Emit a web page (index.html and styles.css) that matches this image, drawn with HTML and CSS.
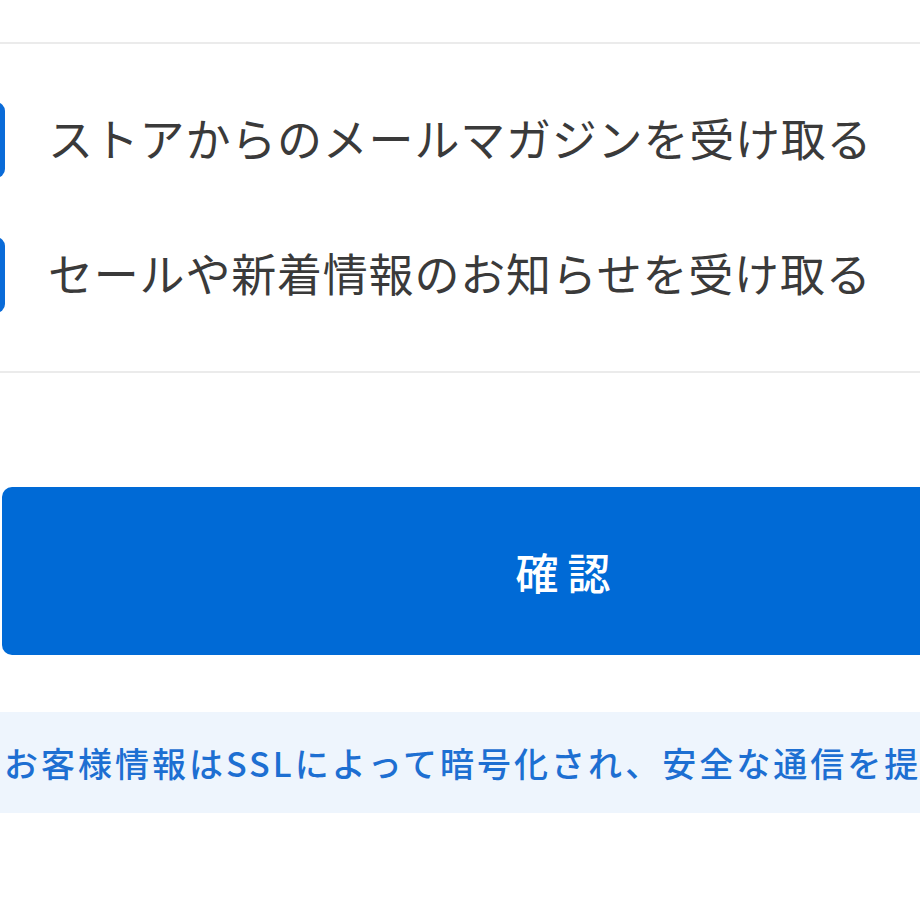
FILE: index.html
```html
<!DOCTYPE html>
<html lang="ja">
<head>
  <meta charset="UTF-8">
  <meta name="viewport" content="width=device-width, initial-scale=1.0">
  <title>確認</title>
  <link rel="stylesheet" href="styles.css">
</head>
<body>
  <div class="page">
    <div class="options">
      <label class="option">
        <span class="box"></span>
        <span class="label">ストアからのメールマガジンを受け取る</span>
      </label>
      <label class="option">
        <span class="box"></span>
        <span class="label">セールや新着情報のお知らせを受け取る</span>
      </label>
    </div>

    <button class="submit" type="button">確認</button>

    <div class="notice">お客様情報はSSLによって暗号化され、安全な通信を提供しています。</div>
  </div>
</body>
</html>
```

FILE: styles.css
```css
body {
  margin: 0;
  font-family: "Noto Sans CJK JP", "Noto Sans", sans-serif;
  background: #fff;
  overflow: hidden;
}

.page {
  width: 1124px;
}

.options {
  margin-top: 42px;
  border-top: 2px solid #ebebeb;
  border-bottom: 2px solid #ebebeb;
  padding: 58px 0;
  display: flex;
  flex-direction: column;
  gap: 59px;
}

.option {
  display: flex;
  align-items: center;
  gap: 43px;
  height: 76px;
  margin-left: -71px;
}

.box {
  width: 76px;
  height: 76px;
  border-radius: 9px;
  background: #0a6bd8;
  flex-shrink: 0;
}

.label {
  padding-bottom: 5px;
  font-size: 45px;
  line-height: 1;
  letter-spacing: 0.8px;
  color: #3a3a3a;
}

.submit {
  display: flex;
  align-items: center;
  justify-content: center;
  margin: 114px 0 0 2px;
  width: 1122px;
  height: 168px;
  padding: 0 0 0 9px;
  border: none;
  border-radius: 10px;
  background: #006ad6;
  color: #fff;
  font-family: inherit;
  font-size: 43px;
  font-weight: 500;
  letter-spacing: 9px;
}

.notice {
  display: flex;
  align-items: center;
  margin-top: 57px;
  height: 101px;
  padding-left: 4px;
  background: #eef5fd;
  color: #1d6fd2;
  font-size: 34px;
  font-weight: 500;
  letter-spacing: 3px;
  white-space: nowrap;
  overflow: hidden;
}
```
